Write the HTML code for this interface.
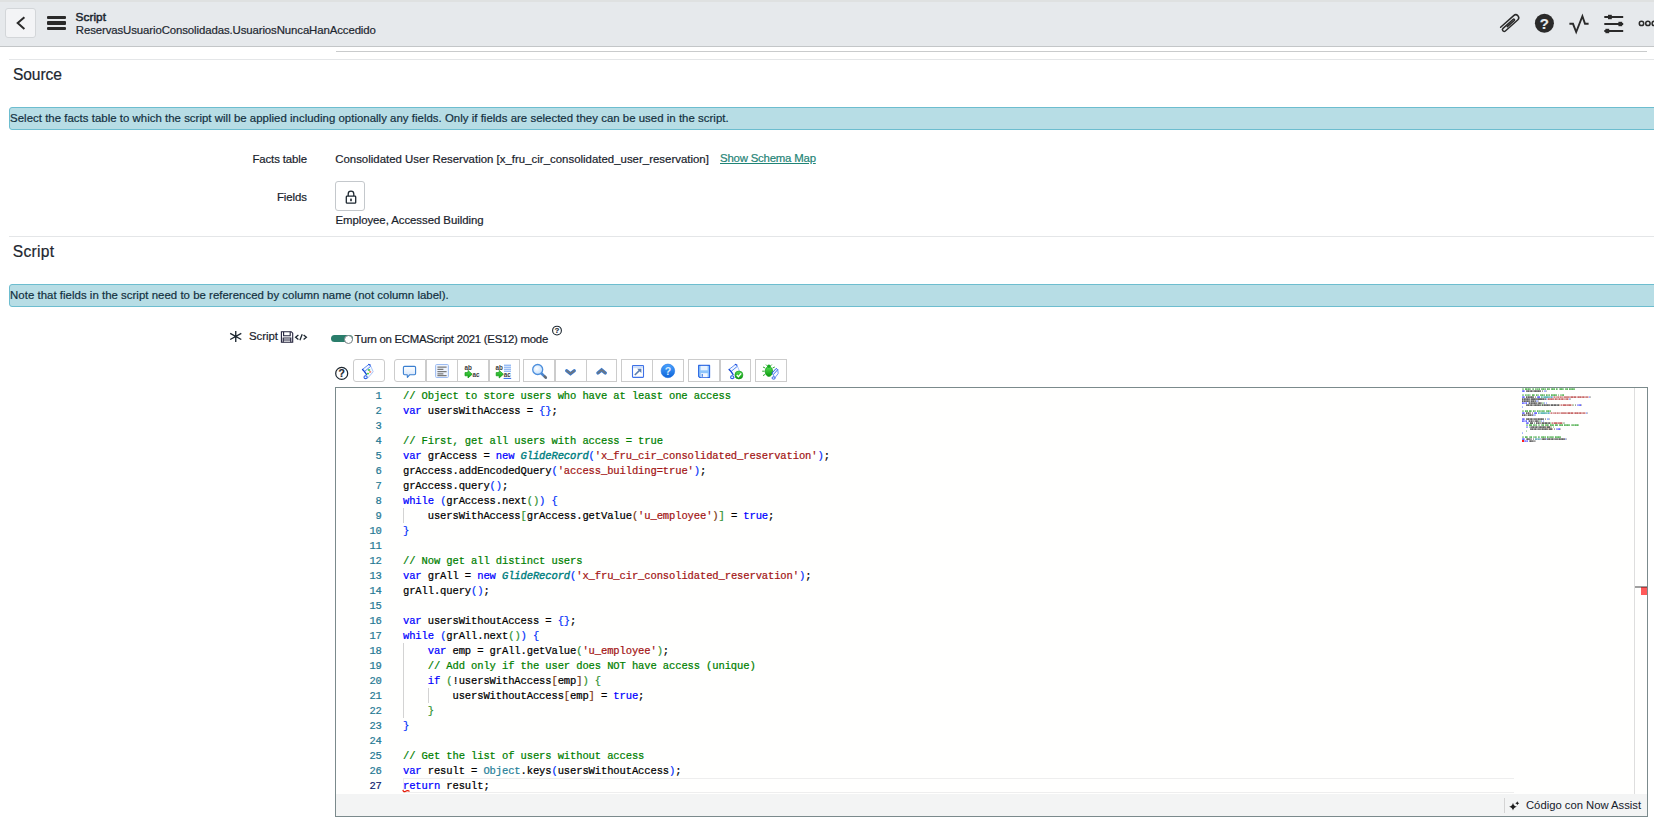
<!DOCTYPE html>
<html lang="en">
<head>
<meta charset="utf-8">
<title>Script</title>
<style>
*{box-sizing:border-box;margin:0;padding:0}
html,body{width:1654px;height:820px;overflow:hidden;background:#fff}
body{position:relative;font-family:"Liberation Sans",sans-serif;font-size:11.4px;color:#18222c;-webkit-text-stroke:0.2px currentColor}
.abs{position:absolute;white-space:nowrap}
.t{position:absolute;white-space:pre;line-height:14px;height:14px}
/* header */
#hdr{position:absolute;left:0;top:0;width:1654px;height:47px;background:#e6e9ec;border-bottom:1px solid #c3c6c8}
#hdr .topline{position:absolute;left:0;top:0;width:100%;height:2px;background:#dfe1e1}
#back{position:absolute;left:5px;top:8px;width:31px;height:30px;background:#f3f4f6;border:1px solid #d3d6d9;border-radius:3px}
.hl{position:absolute;height:1px}
/* info bars */
.info{position:absolute;left:9px;width:1660px;height:23px;background:#b7dde5;border:1px solid #6dbdcf;border-radius:3px}
.info span{position:absolute;left:0.1px;top:2.7px;line-height:14px;white-space:pre;color:#12303f}
/* toolbar buttons */
.tb{position:absolute;top:359px;height:23px;background:#fff;border:1px solid #ccc;border-radius:3px}
.tb i{position:absolute;top:0;width:1px;height:21px;background:#ccc}
.ic{position:absolute;top:362.5px;width:16px;height:16px}
/* editor */
#ed{position:absolute;left:335px;top:387px;width:1313px;height:430px;border:1px solid #7b8a8c;background:#fffffe;overflow:hidden}
#code{position:absolute;left:0;top:0;font-family:"Liberation Mono",monospace;font-size:10.5px;letter-spacing:-0.115px;line-height:15px;color:#000;-webkit-text-stroke:0.22px currentColor}
#code .ln{position:absolute;left:0;width:45.8px;text-align:right;color:#237893;white-space:pre;height:15px}
#code .ln.cur{color:#0b216f}
#code .cl{position:absolute;left:67px;white-space:pre;height:15px}
.c{color:#008000}.k{color:#0000ff}.s{color:#a31515}.g{color:#008080;font-style:italic;-webkit-text-stroke:0.4px currentColor}.o{color:#267f99}.b1{color:#0431fa}.b2{color:#319331}.b3{color:#7b3814}
.guide{position:absolute;width:1px;background:#d3d3d3}
#status{position:absolute;left:0;top:406px;width:1311px;height:22px;background:#f3f4f4}
</style>
</head>
<body>
<!-- HEADER -->
<div id="hdr">
  <div class="topline"></div>
  <div id="back"><svg width="29" height="28" viewBox="0 0 29 28" style="position:absolute;left:0;top:0"><path d="M18.4 8.3 L11.7 14.1 L18.4 19.9" fill="none" stroke="#2a2a2a" stroke-width="2" stroke-linecap="butt" stroke-linejoin="miter"/></svg></div>
  <div class="abs" style="left:46.7px;top:16px;width:19.5px;height:3.4px;background:#2a2a2a;border-radius:1px"></div>
  <div class="abs" style="left:46.7px;top:21.4px;width:19.5px;height:3.4px;background:#2a2a2a;border-radius:1px"></div>
  <div class="abs" style="left:46.7px;top:26.8px;width:19.5px;height:3.4px;background:#2a2a2a;border-radius:1px"></div>
  <div class="t" id="h1" style="left:75.6px;top:10px;font-size:11.8px;letter-spacing:0.05px;-webkit-text-stroke:0.5px #1d2730;color:#1d2730">Script</div>
  <div class="t" id="h2" style="left:75.8px;top:22.6px;font-size:11.4px;letter-spacing:-0.1px;color:#1d2730">ReservasUsuarioConsolidadas.UsuariosNuncaHanAccedido</div>
  <!-- right icons -->
  <svg class="abs" style="left:1496px;top:10px" width="158" height="28" viewBox="1496 10 158 28">
    <!-- paperclip -->
    <g fill="none" stroke="#2a2a2a" stroke-width="1.5" stroke-linecap="round" stroke-linejoin="round" transform="matrix(0.747 -0.664 0.664 0.747 1500.6 27.2)">
      <path d="M0 0 L17.5 0 A3 3 0 0 1 17.5 6 L1 6 A1.75 1.75 0 0 1 1 2.5 L14.7 2.5 A0.8 0.8 0 0 1 14.7 4.1 L5.4 4.1"/>
    </g>
    <!-- help -->
    <circle cx="1544.4" cy="23.3" r="9.5" fill="#2a2a2a"/>
    <!-- activity -->
    <path d="M1569.4 23.8 H1573 L1576.2 32 L1582.4 16.2 L1585 23.8 H1588.6" fill="none" stroke="#2a2a2a" stroke-width="1.9" stroke-linejoin="miter"/>
    <!-- sliders -->
    <g stroke="#2a2a2a" stroke-width="2" fill="#2a2a2a">
      <path d="M1604.3 17 H1623.2 M1604.3 24 H1623.2 M1604.3 31 H1623.2" fill="none"/>
      <rect x="1608" y="14.8" width="3.8" height="4.4" stroke="none"/>
      <rect x="1618.4" y="21.8" width="3.8" height="4.4" stroke="none"/>
      <rect x="1605.4" y="28.8" width="3.8" height="4.4" stroke="none"/>
    </g>
    <!-- more -->
    <g fill="none" stroke="#2a2a2a" stroke-width="1.5">
      <circle cx="1641.5" cy="23.4" r="2.2"/><circle cx="1647.9" cy="23.4" r="2.2"/><circle cx="1654.3" cy="23.4" r="2.2"/>
    </g>
  </svg>
  <div class="abs" id="hq" style="left:1539.4px;top:15.2px;width:10px;height:18px;line-height:18px;text-align:center;font-weight:bold;font-size:15px;color:#e6e9ec">?</div>
</div>
<div class="hl" style="left:336px;top:51px;width:1311px;background:#c9cbcc"></div>
<div class="hl" style="left:9px;top:59px;width:1645px;background:#e4e6e8"></div>
<div class="t" id="src" style="left:13px;top:64.9px;font-size:15.6px;line-height:20px;height:20px;letter-spacing:-0.12px;color:#1d2730">Source</div>
<div class="info" style="top:107px"><span id="i1" style="letter-spacing:0.033px">Select the facts table to which the script will be applied including optionally any fields. Only if fields are selected they can be used in the script.</span></div>
<div class="t" id="l1" style="left:252.4px;top:152px;letter-spacing:-0.1px">Facts table</div>
<div class="t" id="v1" style="left:335.2px;top:152px;letter-spacing:0.02px">Consolidated User Reservation [x_fru_cir_consolidated_user_reservation]</div>
<div class="t" id="lk" style="left:720px;top:151px;letter-spacing:-0.2px;color:#1f8476;text-decoration:underline">Show Schema Map</div>
<div class="t" id="l2" style="left:277px;top:190px;letter-spacing:-0.1px">Fields</div>
<div class="abs" id="lock" style="left:335px;top:181px;width:30px;height:29.5px;border:1px solid #c4c8cc;border-radius:3px;background:#fff">
  <svg width="28" height="28" viewBox="0 0 28 28" style="position:absolute;left:0;top:0"><rect x="10.3" y="14.2" width="9.4" height="7" rx="0.8" fill="none" stroke="#1d2730" stroke-width="1.3"/><path d="M12.2 14 V12 A2.8 2.8 0 0 1 17.8 12 V14" fill="none" stroke="#1d2730" stroke-width="1.3"/><rect x="14.2" y="16.6" width="1.6" height="2.6" fill="#1d2730"/></svg>
</div>
<div class="t" id="v2" style="left:335.4px;top:213px;letter-spacing:-0.05px">Employee, Accessed Building</div>
<div class="hl" style="left:9px;top:236px;width:1645px;background:#e4e6e8"></div>
<div class="t" id="scr" style="left:12.8px;top:242.2px;font-size:15.6px;line-height:20px;height:20px;letter-spacing:0.3px;color:#1d2730">Script</div>
<div class="info" style="top:284px"><span id="i2" style="letter-spacing:0.034px">Note that fields in the script need to be referenced by column name (not column label).</span></div>
<!-- script label row -->
<svg class="abs" style="left:228px;top:329px" width="16" height="15" viewBox="228 329 16 15"><path d="M235.75 330.9 V342 M230.2 333.4 L241.3 339.5 M241.3 333.4 L230.2 339.5" stroke="#1d2730" stroke-width="1.35" fill="none"/></svg>
<div class="t" id="l3" style="left:249px;top:329px;letter-spacing:-0.05px">Script</div>
<svg class="abs" style="left:280px;top:330px" width="30" height="14" viewBox="280 330 30 14">
  <g fill="none" stroke="#23233d" stroke-width="1.1">
    <path d="M281.4 331.7 H291.2 L292.7 333.2 V342.2 H281.4 Z"/>
    <path d="M283.6 331.7 V335.8 H290.2 V331.7"/>
    <path d="M283.2 342.2 V338 H290.8 V342.2 M283.2 340 H290.8" fill="none"/>
  </g>
  <g fill="none" stroke="#1d2730" stroke-width="1.3"><path d="M298.4 334.9 L295.6 337.2 L298.4 339.5"/><path d="M303.6 334.9 L306.4 337.2 L303.6 339.5"/><path d="M302.2 334.2 L299.9 340.2"/></g>
</svg>
<div class="abs" style="left:331px;top:335.2px;width:21.6px;height:7px;border-radius:3.5px;background:#2a7d6b"></div>
<div class="abs" style="left:344.2px;top:334.6px;width:9px;height:9px;border-radius:50%;background:#fff;border:1px solid #7b8387"></div>
<div class="t" id="tg" style="left:354.6px;top:331.7px;letter-spacing:-0.27px">Turn on ECMAScript 2021 (ES12) mode</div>
<svg class="abs" style="left:551px;top:325px" width="12" height="12" viewBox="0 0 12 12"><circle cx="6" cy="5.6" r="4.4" fill="none" stroke="#1d2730" stroke-width="1.1"/></svg>
<div class="abs" id="tgq" style="left:554px;top:326.2px;width:6px;height:9px;line-height:9px;font-size:7.4px;font-weight:bold;text-align:center;color:#1d2730">?</div>
<!-- toolbar -->
<svg class="abs" style="left:334px;top:366px" width="16" height="16" viewBox="0 0 16 16"><circle cx="7.7" cy="7.4" r="6" fill="none" stroke="#1d2730" stroke-width="1.2"/></svg>
<div class="abs" id="tbq" style="left:337.7px;top:367.2px;width:8px;height:13px;line-height:13px;font-size:10.4px;font-weight:bold;text-align:center;color:#1d2730">?</div>
<div class="tb" style="left:353.20px;width:31.38px;border-radius:3px"></div>
<div class="tb" style="left:394.40px;width:31.98px;border-radius:3px 0 0 3px"></div>
<div class="tb" style="left:425.78px;width:31.98px;border-radius:0"></div>
<div class="tb" style="left:457.16px;width:31.98px;border-radius:0"></div>
<div class="tb" style="left:488.54px;width:31.38px;border-radius:0"></div>
<div class="tb" style="left:523.20px;width:31.98px;border-radius:0"></div>
<div class="tb" style="left:554.58px;width:31.98px;border-radius:0"></div>
<div class="tb" style="left:585.96px;width:31.38px;border-radius:0"></div>
<div class="tb" style="left:621.10px;width:31.98px;border-radius:0"></div>
<div class="tb" style="left:652.48px;width:31.38px;border-radius:0"></div>
<div class="tb" style="left:688.20px;width:31.98px;border-radius:0"></div>
<div class="tb" style="left:719.58px;width:31.38px;border-radius:0"></div>
<div class="tb" style="left:755.20px;width:31.38px;border-radius:0"></div>
<svg class="abs" style="left:350px;top:358px" width="440" height="26" viewBox="350 358 440 26">
<defs>
<linearGradient id="gb" x1="0" y1="0" x2="0" y2="1"><stop offset="0" stop-color="#4aa3ff"/><stop offset="1" stop-color="#0d63d8"/></linearGradient>
<linearGradient id="gl" x1="0" y1="0" x2="0" y2="1"><stop offset="0" stop-color="#ffffff"/><stop offset="1" stop-color="#cfe2fb"/></linearGradient>
<radialGradient id="gm" cx="0.4" cy="0.4" r="0.7"><stop offset="0" stop-color="#ffffff"/><stop offset="1" stop-color="#b9dafc"/></radialGradient>
<linearGradient id="gg" x1="0" y1="0" x2="0" y2="1"><stop offset="0" stop-color="#58e058"/><stop offset="1" stop-color="#0a9a0a"/></linearGradient>
</defs>
<!-- 1 scroll with arrows -->
<g transform="translate(0 0)"><path d="M364.6 371.4 L370.8 366.2 L373.2 371.8 L367.8 378 L365 376 L366.4 374.4 Z" fill="#f8fbff" stroke="#9fbdf8" stroke-width="0.9" stroke-linejoin="round"/><path d="M362.6 369.3 L368.9 364.4 L370.8 366.2 L364.6 371.4 Z" fill="#f0f6ff" stroke="#4f82f2" stroke-width="0.9" stroke-linejoin="round"/><path d="M362.5 369.5 L364.5 371.6 L366.4 374.4" fill="none" stroke="#1446d4" stroke-width="1.3" stroke-linecap="round" stroke-linejoin="round"/><path d="M368.7 364.4 L370.3 365" fill="none" stroke="#1748d8" stroke-width="1.1" stroke-linecap="round"/><ellipse cx="365.6" cy="377.2" rx="1.6" ry="1.4" fill="#eaf2ff" stroke="#2c62e4" stroke-width="1.1"/><ellipse cx="369" cy="370" rx="1.3" ry="0.9" fill="#4fd04f"/><ellipse cx="367.9" cy="373.6" rx="1.3" ry="0.9" fill="#4fd04f"/><ellipse cx="370.1" cy="371.9" rx="1.2" ry="0.9" fill="#f08078"/></g>
<!-- 2 comment bubble -->
<path d="M404.6 366.4 H414.4 Q415.6 366.4 415.6 367.6 V373.6 Q415.6 374.8 414.4 374.8 H409.6 L407.4 377.4 L407.2 374.8 H404.6 Q403.4 374.8 403.4 373.6 V367.6 Q403.4 366.4 404.6 366.4 Z" fill="url(#gl)" stroke="#3a7fd0" stroke-width="1.1" stroke-linejoin="round"/>
<!-- 3 align -->
<rect x="435.6" y="364.5" width="12.8" height="13" rx="1" fill="#eef4ff" stroke="#9dbcf2" stroke-width="1"/>
<path d="M437.4 367.2 H446.6 M437.4 369.4 H443.4 M437.4 371.6 H446.6 M437.4 373.8 H443.4 M437.4 375.6 H446.6" stroke="#7a7a7a" stroke-width="1.2"/>
<!-- 4 replace -->
<text x="464.6" y="369.6" font-family="Liberation Sans, sans-serif" font-size="6.3" font-weight="bold" fill="#3a3a3a" letter-spacing="-0.2">ab</text>
<path d="M465 372.6 h3 v-2.2 l4.2 3.8 l-4.2 3.8 v-2.2 h-3 Z" fill="url(#gg)" stroke="#0f9a12" stroke-width="0.7" stroke-linejoin="round"/>
<text x="472.6" y="376.6" font-family="Liberation Sans, sans-serif" font-size="6.3" font-weight="bold" fill="#3a3a3a" letter-spacing="-0.1">ac</text>
<!-- 5 replace all -->
<path d="M504 365.2 H511 M504 367.2 H511 M504 369.2 H511 M504 371.2 H511" stroke="#6aa0f2" stroke-width="1"/>
<text x="495.6" y="369.6" font-family="Liberation Sans, sans-serif" font-size="6.3" font-weight="bold" fill="#3a3a3a" letter-spacing="-0.2">ab</text>
<path d="M496.2 372.6 h3 v-2.2 l4.2 3.8 l-4.2 3.8 v-2.2 h-3 Z" fill="url(#gg)" stroke="#0f9a12" stroke-width="0.7" stroke-linejoin="round"/>
<text x="503.8" y="376.8" font-family="Liberation Sans, sans-serif" font-size="6.3" font-weight="bold" fill="#3a3a3a" letter-spacing="-0.1">ac</text>
<path d="M503.6 378.4 H511.2" stroke="#2f6be8" stroke-width="1"/>
<!-- 6 magnifier -->
<path d="M541.2 373.2 L545.8 377.6" stroke="#4a86d0" stroke-width="2.6" stroke-linecap="round"/>
<path d="M544.6 376.4 L545.8 377.6" stroke="#6b6b6b" stroke-width="2.2" stroke-linecap="round"/>
<circle cx="537.7" cy="369.5" r="5" fill="url(#gm)" stroke="#4d8fdc" stroke-width="1.3"/>
<!-- 7 chevron down -->
<path d="M566.7 370.7 L570.5 373.7 L574.3 370.7" fill="none" stroke="#3c7acb" stroke-width="3.3" stroke-linecap="round" stroke-linejoin="miter"/>
<path d="M566.9 370.8 L570.5 373.6 L574.1 370.8" fill="none" stroke="#70757c" stroke-width="1.6" stroke-linecap="round" stroke-linejoin="miter"/>
<!-- 8 chevron up -->
<path d="M597.9 373 L601.6 369.9 L605.3 373" fill="none" stroke="#3c7acb" stroke-width="3.3" stroke-linecap="round" stroke-linejoin="miter"/>
<path d="M598.1 372.9 L601.6 370 L605.1 372.9" fill="none" stroke="#70757c" stroke-width="1.6" stroke-linecap="round" stroke-linejoin="miter"/>
<!-- 9 popout -->
<rect x="632.5" y="365.6" width="11" height="11.8" rx="0.6" fill="#fff" stroke="#3f72e6" stroke-width="1.1"/>
<rect x="633.1" y="366.2" width="9.8" height="2" fill="#cfe0fa"/>
<path d="M634.8 375 L640.6 369.4" stroke="#5d7fae" stroke-width="1.6"/>
<path d="M637.2 368.8 H641.4 V373 Z" fill="#5d7fae"/>
<!-- 10 help -->
<circle cx="667.9" cy="370.9" r="6.8" fill="url(#gb)" stroke="#1a6fe0" stroke-width="0.6"/>
<text x="667.9" y="374.6" text-anchor="middle" font-family="Liberation Sans, sans-serif" font-weight="bold" font-size="10.6" fill="#d7ebff">?</text>
<!-- 11 floppy -->
<path d="M698.6 365.4 H709.6 V377.5 H699.8 L698.6 376.3 Z" fill="#8ec5fb" stroke="#2d68e2" stroke-width="1.1" stroke-linejoin="round"/>
<rect x="700.6" y="365.9" width="7" height="4.4" fill="#e9f3ff"/>
<rect x="700.8" y="373.2" width="6.8" height="4" fill="#f4f8ff"/>
<rect x="701.6" y="374" width="1.4" height="2.8" fill="#5a8ee8"/>
<!-- 12 scroll check -->
<g transform="translate(366.6 0)"><path d="M364.6 371.4 L370.8 366.2 L373.2 371.8 L367.8 378 L365 376 L366.4 374.4 Z" fill="#f8fbff" stroke="#9fbdf8" stroke-width="0.9" stroke-linejoin="round"/><path d="M362.6 369.3 L368.9 364.4 L370.8 366.2 L364.6 371.4 Z" fill="#f0f6ff" stroke="#4f82f2" stroke-width="0.9" stroke-linejoin="round"/><path d="M362.5 369.5 L364.5 371.6 L366.4 374.4" fill="none" stroke="#1446d4" stroke-width="1.3" stroke-linecap="round" stroke-linejoin="round"/><path d="M368.7 364.4 L370.3 365" fill="none" stroke="#1748d8" stroke-width="1.1" stroke-linecap="round"/><ellipse cx="365.6" cy="377.2" rx="1.6" ry="1.4" fill="#eaf2ff" stroke="#2c62e4" stroke-width="1.1"/></g>
<circle cx="738.9" cy="375" r="4" fill="url(#gg)" stroke="#0c8a14" stroke-width="0.6"/>
<path d="M736.8 375 L738.4 376.7 L741.2 373.3" fill="none" stroke="#fff" stroke-width="1.3"/>
<!-- 13 bug -->
<path d="M765.2 368 l-2.2 -1 M764.6 371.2 h-2.4 M765.2 374.4 l-2.2 1.2 M772.6 368 l2.2 -1 M767.2 365.8 l-1.2 -1.2 M770.6 365.8 l1.2 -1.2" stroke="#14a01a" stroke-width="0.9" fill="none"/>
<ellipse cx="768.9" cy="371.4" rx="3.7" ry="5" fill="url(#gg)" stroke="#0c9416" stroke-width="0.7"/>
<circle cx="768.9" cy="366.2" r="1.7" fill="#18a822"/>
<path d="M776.2 368.4 L777.8 369.8 L773.4 374.6 L771.8 373.2 Z" fill="#e8f0ff" stroke="#2a5ae0" stroke-width="1" stroke-linejoin="round"/>
<path d="M773.4 374.6 L777.8 369.8 L778.2 373.6 L774.4 378.4 Z" fill="#f6f9ff" stroke="#5c8af0" stroke-width="0.9" stroke-linejoin="round"/>
<ellipse cx="773.6" cy="378" rx="1.6" ry="1.2" fill="#dfe9ff" stroke="#2a5ae0" stroke-width="0.9"/>
</svg>


<div id="ed">
  <div class="abs" style="left:67px;top:390px;width:1111px;height:15px;border:1px solid #eeeeee;border-right:none"></div>
  <div class="guide" style="left:67px;top:120px;height:15px"></div>
  <div class="guide" style="left:67px;top:255px;height:75px"></div>
  <div class="guide" style="left:91.7px;top:300px;height:15px"></div>
  <div id="code">
<div class="ln" style="top:0.7px">1</div><div class="cl" style="top:0.7px"><span class="c">// Object to store users who have at least one access</span></div>
<div class="ln" style="top:15.7px">2</div><div class="cl" style="top:15.7px"><span class="k">var</span> usersWithAccess = <span class="b1">{</span><span class="b1">}</span>;</div>
<div class="ln" style="top:30.7px">3</div><div class="cl" style="top:30.7px"></div>
<div class="ln" style="top:45.7px">4</div><div class="cl" style="top:45.7px"><span class="c">// First, get all users with access = true</span></div>
<div class="ln" style="top:60.7px">5</div><div class="cl" style="top:60.7px"><span class="k">var</span> grAccess = <span class="k">new</span> <span class="g">GlideRecord</span><span class="b1">(</span><span class="s">&#x27;x_fru_cir_consolidated_reservation&#x27;</span><span class="b1">)</span>;</div>
<div class="ln" style="top:75.7px">6</div><div class="cl" style="top:75.7px">grAccess.addEncodedQuery<span class="b1">(</span><span class="s">&#x27;access_building=true&#x27;</span><span class="b1">)</span>;</div>
<div class="ln" style="top:90.7px">7</div><div class="cl" style="top:90.7px">grAccess.query<span class="b1">(</span><span class="b1">)</span>;</div>
<div class="ln" style="top:105.7px">8</div><div class="cl" style="top:105.7px"><span class="k">while</span> <span class="b1">(</span>grAccess.next<span class="b2">(</span><span class="b2">)</span><span class="b1">)</span> <span class="b1">{</span></div>
<div class="ln" style="top:120.7px">9</div><div class="cl" style="top:120.7px">    usersWithAccess<span class="b2">[</span>grAccess.getValue<span class="b3">(</span><span class="s">&#x27;u_employee&#x27;</span><span class="b3">)</span><span class="b2">]</span> = <span class="k">true</span>;</div>
<div class="ln" style="top:135.7px">10</div><div class="cl" style="top:135.7px"><span class="b1">}</span></div>
<div class="ln" style="top:150.7px">11</div><div class="cl" style="top:150.7px"></div>
<div class="ln" style="top:165.7px">12</div><div class="cl" style="top:165.7px"><span class="c">// Now get all distinct users</span></div>
<div class="ln" style="top:180.7px">13</div><div class="cl" style="top:180.7px"><span class="k">var</span> grAll = <span class="k">new</span> <span class="g">GlideRecord</span><span class="b1">(</span><span class="s">&#x27;x_fru_cir_consolidated_reservation&#x27;</span><span class="b1">)</span>;</div>
<div class="ln" style="top:195.7px">14</div><div class="cl" style="top:195.7px">grAll.query<span class="b1">(</span><span class="b1">)</span>;</div>
<div class="ln" style="top:210.7px">15</div><div class="cl" style="top:210.7px"></div>
<div class="ln" style="top:225.7px">16</div><div class="cl" style="top:225.7px"><span class="k">var</span> usersWithoutAccess = <span class="b1">{</span><span class="b1">}</span>;</div>
<div class="ln" style="top:240.7px">17</div><div class="cl" style="top:240.7px"><span class="k">while</span> <span class="b1">(</span>grAll.next<span class="b2">(</span><span class="b2">)</span><span class="b1">)</span> <span class="b1">{</span></div>
<div class="ln" style="top:255.7px">18</div><div class="cl" style="top:255.7px">    <span class="k">var</span> emp = grAll.getValue<span class="b2">(</span><span class="s">&#x27;u_employee&#x27;</span><span class="b2">)</span>;</div>
<div class="ln" style="top:270.7px">19</div><div class="cl" style="top:270.7px">    <span class="c">// Add only if the user does NOT have access (unique)</span></div>
<div class="ln" style="top:285.7px">20</div><div class="cl" style="top:285.7px">    <span class="k">if</span> <span class="b2">(</span>!usersWithAccess<span class="b3">[</span>emp<span class="b3">]</span><span class="b2">)</span> <span class="b2">{</span></div>
<div class="ln" style="top:300.7px">21</div><div class="cl" style="top:300.7px">        usersWithoutAccess<span class="b3">[</span>emp<span class="b3">]</span> = <span class="k">true</span>;</div>
<div class="ln" style="top:315.7px">22</div><div class="cl" style="top:315.7px">    <span class="b2">}</span></div>
<div class="ln" style="top:330.7px">23</div><div class="cl" style="top:330.7px"><span class="b1">}</span></div>
<div class="ln" style="top:345.7px">24</div><div class="cl" style="top:345.7px"></div>
<div class="ln" style="top:360.7px">25</div><div class="cl" style="top:360.7px"><span class="c">// Get the list of users without access</span></div>
<div class="ln" style="top:375.7px">26</div><div class="cl" style="top:375.7px"><span class="k">var</span> result = <span class="o">Object</span>.keys<span class="b1">(</span>usersWithoutAccess<span class="b1">)</span>;</div>
<div class="ln cur" style="top:390.7px">27</div><div class="cl" style="top:390.7px"><span class="k">return</span> result;</div>
  </div>
  <svg class="abs" style="left:66px;top:400px;z-index:3" width="10" height="6" viewBox="0 0 10 6"><path d="M0.9 1.8 Q1.5 4.6 3.6 3.2 Q5.6 1.8 7.6 3.4" fill="none" stroke="#e51400" stroke-width="1.2"/></svg>
  <!-- minimap -->
  <svg class="abs" style="left:1186px;top:0" width="126" height="60" viewBox="0 0 126 60"><rect x="0" y="0.3" width="2" height="1.6" fill="#1f9a1f" opacity="0.47"/><rect x="3" y="0.3" width="2" height="1.6" fill="#1f9a1f" opacity="0.78"/><rect x="5" y="0.3" width="1" height="1.6" fill="#1f9a1f" opacity="0.47"/><rect x="6" y="0.3" width="1" height="1.6" fill="#1f9a1f" opacity="0.78"/><rect x="7" y="0.3" width="1" height="1.6" fill="#1f9a1f" opacity="0.64"/><rect x="8" y="0.3" width="1" height="1.6" fill="#1f9a1f" opacity="0.47"/><rect x="10" y="0.3" width="1" height="1.6" fill="#1f9a1f" opacity="0.47"/><rect x="11" y="0.3" width="1" height="1.6" fill="#1f9a1f" opacity="0.64"/><rect x="13" y="0.3" width="1" height="1.6" fill="#1f9a1f" opacity="0.64"/><rect x="14" y="0.3" width="1" height="1.6" fill="#1f9a1f" opacity="0.47"/><rect x="15" y="0.3" width="1" height="1.6" fill="#1f9a1f" opacity="0.64"/><rect x="16" y="0.3" width="1" height="1.6" fill="#1f9a1f" opacity="0.47"/><rect x="17" y="0.3" width="1" height="1.6" fill="#1f9a1f" opacity="0.78"/><rect x="19" y="0.3" width="2" height="1.6" fill="#1f9a1f" opacity="0.64"/><rect x="21" y="0.3" width="1" height="1.6" fill="#1f9a1f" opacity="0.78"/><rect x="22" y="0.3" width="1" height="1.6" fill="#1f9a1f" opacity="0.47"/><rect x="23" y="0.3" width="1" height="1.6" fill="#1f9a1f" opacity="0.64"/><rect x="25" y="0.3" width="1" height="1.6" fill="#1f9a1f" opacity="0.78"/><rect x="26" y="0.3" width="2" height="1.6" fill="#1f9a1f" opacity="0.64"/><rect x="29" y="0.3" width="1" height="1.6" fill="#1f9a1f" opacity="0.64"/><rect x="30" y="0.3" width="1" height="1.6" fill="#1f9a1f" opacity="0.78"/><rect x="31" y="0.3" width="1" height="1.6" fill="#1f9a1f" opacity="0.64"/><rect x="32" y="0.3" width="1" height="1.6" fill="#1f9a1f" opacity="0.78"/><rect x="34" y="0.3" width="1" height="1.6" fill="#1f9a1f" opacity="0.78"/><rect x="35" y="0.3" width="1" height="1.6" fill="#1f9a1f" opacity="0.47"/><rect x="37" y="0.3" width="1" height="1.6" fill="#1f9a1f" opacity="0.47"/><rect x="38" y="0.3" width="2" height="1.6" fill="#1f9a1f" opacity="0.78"/><rect x="40" y="0.3" width="1" height="1.6" fill="#1f9a1f" opacity="0.64"/><rect x="41" y="0.3" width="1" height="1.6" fill="#1f9a1f" opacity="0.47"/><rect x="43" y="0.3" width="2" height="1.6" fill="#1f9a1f" opacity="0.64"/><rect x="45" y="0.3" width="1" height="1.6" fill="#1f9a1f" opacity="0.78"/><rect x="47" y="0.3" width="1" height="1.6" fill="#1f9a1f" opacity="0.78"/><rect x="48" y="0.3" width="2" height="1.6" fill="#1f9a1f" opacity="0.64"/><rect x="50" y="0.3" width="1" height="1.6" fill="#1f9a1f" opacity="0.78"/><rect x="51" y="0.3" width="2" height="1.6" fill="#1f9a1f" opacity="0.64"/><rect x="0" y="2.3" width="1" height="1.6" fill="#2a2aff" opacity="0.64"/><rect x="1" y="2.3" width="1" height="1.6" fill="#2a2aff" opacity="0.78"/><rect x="2" y="2.3" width="1" height="1.6" fill="#2a2aff" opacity="0.47"/><rect x="4" y="2.3" width="2" height="1.6" fill="#222222" opacity="0.64"/><rect x="6" y="2.3" width="1" height="1.6" fill="#222222" opacity="0.78"/><rect x="7" y="2.3" width="1" height="1.6" fill="#222222" opacity="0.47"/><rect x="8" y="2.3" width="1" height="1.6" fill="#222222" opacity="0.64"/><rect x="9" y="2.3" width="1" height="1.6" fill="#222222" opacity="0.78"/><rect x="10" y="2.3" width="2" height="1.6" fill="#222222" opacity="0.47"/><rect x="12" y="2.3" width="1" height="1.6" fill="#222222" opacity="0.64"/><rect x="13" y="2.3" width="1" height="1.6" fill="#222222" opacity="0.78"/><rect x="14" y="2.3" width="2" height="1.6" fill="#222222" opacity="0.64"/><rect x="16" y="2.3" width="1" height="1.6" fill="#222222" opacity="0.78"/><rect x="17" y="2.3" width="2" height="1.6" fill="#222222" opacity="0.64"/><rect x="20" y="2.3" width="1" height="1.6" fill="#222222" opacity="0.47"/><rect x="22" y="2.3" width="1" height="1.6" fill="#2a4cfb" opacity="0.47"/><rect x="23" y="2.3" width="1" height="1.6" fill="#2a4cfb" opacity="0.47"/><rect x="24" y="2.3" width="1" height="1.6" fill="#222222" opacity="0.30"/><rect x="0" y="6.3" width="2" height="1.6" fill="#1f9a1f" opacity="0.47"/><rect x="3" y="6.3" width="1" height="1.6" fill="#1f9a1f" opacity="0.64"/><rect x="4" y="6.3" width="2" height="1.6" fill="#1f9a1f" opacity="0.47"/><rect x="6" y="6.3" width="1" height="1.6" fill="#1f9a1f" opacity="0.64"/><rect x="7" y="6.3" width="1" height="1.6" fill="#1f9a1f" opacity="0.47"/><rect x="8" y="6.3" width="1" height="1.6" fill="#1f9a1f" opacity="0.30"/><rect x="10" y="6.3" width="2" height="1.6" fill="#1f9a1f" opacity="0.78"/><rect x="12" y="6.3" width="1" height="1.6" fill="#1f9a1f" opacity="0.47"/><rect x="14" y="6.3" width="1" height="1.6" fill="#1f9a1f" opacity="0.78"/><rect x="15" y="6.3" width="2" height="1.6" fill="#1f9a1f" opacity="0.47"/><rect x="18" y="6.3" width="2" height="1.6" fill="#1f9a1f" opacity="0.64"/><rect x="20" y="6.3" width="1" height="1.6" fill="#1f9a1f" opacity="0.78"/><rect x="21" y="6.3" width="1" height="1.6" fill="#1f9a1f" opacity="0.47"/><rect x="22" y="6.3" width="1" height="1.6" fill="#1f9a1f" opacity="0.64"/><rect x="24" y="6.3" width="1" height="1.6" fill="#1f9a1f" opacity="0.78"/><rect x="25" y="6.3" width="2" height="1.6" fill="#1f9a1f" opacity="0.47"/><rect x="27" y="6.3" width="1" height="1.6" fill="#1f9a1f" opacity="0.64"/><rect x="29" y="6.3" width="1" height="1.6" fill="#1f9a1f" opacity="0.78"/><rect x="30" y="6.3" width="2" height="1.6" fill="#1f9a1f" opacity="0.64"/><rect x="32" y="6.3" width="1" height="1.6" fill="#1f9a1f" opacity="0.78"/><rect x="33" y="6.3" width="2" height="1.6" fill="#1f9a1f" opacity="0.64"/><rect x="36" y="6.3" width="1" height="1.6" fill="#1f9a1f" opacity="0.47"/><rect x="38" y="6.3" width="2" height="1.6" fill="#1f9a1f" opacity="0.47"/><rect x="40" y="6.3" width="1" height="1.6" fill="#1f9a1f" opacity="0.64"/><rect x="41" y="6.3" width="1" height="1.6" fill="#1f9a1f" opacity="0.78"/><rect x="0" y="8.3" width="1" height="1.6" fill="#2a2aff" opacity="0.64"/><rect x="1" y="8.3" width="1" height="1.6" fill="#2a2aff" opacity="0.78"/><rect x="2" y="8.3" width="1" height="1.6" fill="#2a2aff" opacity="0.47"/><rect x="4" y="8.3" width="1" height="1.6" fill="#222222" opacity="0.78"/><rect x="5" y="8.3" width="1" height="1.6" fill="#222222" opacity="0.47"/><rect x="6" y="8.3" width="1" height="1.6" fill="#222222" opacity="0.78"/><rect x="7" y="8.3" width="2" height="1.6" fill="#222222" opacity="0.64"/><rect x="9" y="8.3" width="1" height="1.6" fill="#222222" opacity="0.78"/><rect x="10" y="8.3" width="2" height="1.6" fill="#222222" opacity="0.64"/><rect x="13" y="8.3" width="1" height="1.6" fill="#222222" opacity="0.47"/><rect x="15" y="8.3" width="1" height="1.6" fill="#2a2aff" opacity="0.64"/><rect x="16" y="8.3" width="2" height="1.6" fill="#2a2aff" opacity="0.78"/><rect x="19" y="8.3" width="1" height="1.6" fill="#1f9a9a" opacity="0.78"/><rect x="20" y="8.3" width="2" height="1.6" fill="#1f9a9a" opacity="0.47"/><rect x="22" y="8.3" width="4" height="1.6" fill="#1f9a9a" opacity="0.78"/><rect x="26" y="8.3" width="2" height="1.6" fill="#1f9a9a" opacity="0.64"/><rect x="28" y="8.3" width="1" height="1.6" fill="#1f9a9a" opacity="0.47"/><rect x="29" y="8.3" width="1" height="1.6" fill="#1f9a9a" opacity="0.78"/><rect x="30" y="8.3" width="1" height="1.6" fill="#2a4cfb" opacity="0.47"/><rect x="31" y="8.3" width="1" height="1.6" fill="#b02a2a" opacity="0.30"/><rect x="32" y="8.3" width="1" height="1.6" fill="#b02a2a" opacity="0.64"/><rect x="33" y="8.3" width="1" height="1.6" fill="#b02a2a" opacity="0.30"/><rect x="34" y="8.3" width="2" height="1.6" fill="#b02a2a" opacity="0.47"/><rect x="36" y="8.3" width="1" height="1.6" fill="#b02a2a" opacity="0.64"/><rect x="37" y="8.3" width="1" height="1.6" fill="#b02a2a" opacity="0.30"/><rect x="38" y="8.3" width="1" height="1.6" fill="#b02a2a" opacity="0.64"/><rect x="39" y="8.3" width="2" height="1.6" fill="#b02a2a" opacity="0.47"/><rect x="41" y="8.3" width="1" height="1.6" fill="#b02a2a" opacity="0.30"/><rect x="42" y="8.3" width="5" height="1.6" fill="#b02a2a" opacity="0.64"/><rect x="47" y="8.3" width="2" height="1.6" fill="#b02a2a" opacity="0.47"/><rect x="49" y="8.3" width="2" height="1.6" fill="#b02a2a" opacity="0.78"/><rect x="51" y="8.3" width="1" height="1.6" fill="#b02a2a" opacity="0.47"/><rect x="52" y="8.3" width="2" height="1.6" fill="#b02a2a" opacity="0.78"/><rect x="54" y="8.3" width="1" height="1.6" fill="#b02a2a" opacity="0.30"/><rect x="55" y="8.3" width="1" height="1.6" fill="#b02a2a" opacity="0.47"/><rect x="56" y="8.3" width="1" height="1.6" fill="#b02a2a" opacity="0.78"/><rect x="57" y="8.3" width="1" height="1.6" fill="#b02a2a" opacity="0.64"/><rect x="58" y="8.3" width="1" height="1.6" fill="#b02a2a" opacity="0.78"/><rect x="59" y="8.3" width="1" height="1.6" fill="#b02a2a" opacity="0.47"/><rect x="60" y="8.3" width="1" height="1.6" fill="#b02a2a" opacity="0.64"/><rect x="61" y="8.3" width="1" height="1.6" fill="#b02a2a" opacity="0.78"/><rect x="62" y="8.3" width="2" height="1.6" fill="#b02a2a" opacity="0.47"/><rect x="64" y="8.3" width="2" height="1.6" fill="#b02a2a" opacity="0.64"/><rect x="66" y="8.3" width="1" height="1.6" fill="#b02a2a" opacity="0.30"/><rect x="67" y="8.3" width="1" height="1.6" fill="#2a4cfb" opacity="0.47"/><rect x="68" y="8.3" width="1" height="1.6" fill="#222222" opacity="0.30"/><rect x="0" y="10.3" width="1" height="1.6" fill="#222222" opacity="0.78"/><rect x="1" y="10.3" width="1" height="1.6" fill="#222222" opacity="0.47"/><rect x="2" y="10.3" width="1" height="1.6" fill="#222222" opacity="0.78"/><rect x="3" y="10.3" width="2" height="1.6" fill="#222222" opacity="0.64"/><rect x="5" y="10.3" width="1" height="1.6" fill="#222222" opacity="0.78"/><rect x="6" y="10.3" width="2" height="1.6" fill="#222222" opacity="0.64"/><rect x="8" y="10.3" width="1" height="1.6" fill="#222222" opacity="0.30"/><rect x="9" y="10.3" width="4" height="1.6" fill="#222222" opacity="0.78"/><rect x="13" y="10.3" width="3" height="1.6" fill="#222222" opacity="0.64"/><rect x="16" y="10.3" width="4" height="1.6" fill="#222222" opacity="0.78"/><rect x="20" y="10.3" width="1" height="1.6" fill="#222222" opacity="0.64"/><rect x="21" y="10.3" width="1" height="1.6" fill="#222222" opacity="0.78"/><rect x="22" y="10.3" width="1" height="1.6" fill="#222222" opacity="0.47"/><rect x="23" y="10.3" width="1" height="1.6" fill="#222222" opacity="0.64"/><rect x="24" y="10.3" width="1" height="1.6" fill="#2a4cfb" opacity="0.47"/><rect x="25" y="10.3" width="1" height="1.6" fill="#b02a2a" opacity="0.30"/><rect x="26" y="10.3" width="1" height="1.6" fill="#b02a2a" opacity="0.78"/><rect x="27" y="10.3" width="2" height="1.6" fill="#b02a2a" opacity="0.64"/><rect x="29" y="10.3" width="1" height="1.6" fill="#b02a2a" opacity="0.78"/><rect x="30" y="10.3" width="2" height="1.6" fill="#b02a2a" opacity="0.64"/><rect x="32" y="10.3" width="1" height="1.6" fill="#b02a2a" opacity="0.30"/><rect x="33" y="10.3" width="1" height="1.6" fill="#b02a2a" opacity="0.78"/><rect x="34" y="10.3" width="1" height="1.6" fill="#b02a2a" opacity="0.64"/><rect x="35" y="10.3" width="2" height="1.6" fill="#b02a2a" opacity="0.47"/><rect x="37" y="10.3" width="1" height="1.6" fill="#b02a2a" opacity="0.78"/><rect x="38" y="10.3" width="1" height="1.6" fill="#b02a2a" opacity="0.47"/><rect x="39" y="10.3" width="1" height="1.6" fill="#b02a2a" opacity="0.64"/><rect x="40" y="10.3" width="1" height="1.6" fill="#b02a2a" opacity="0.78"/><rect x="41" y="10.3" width="3" height="1.6" fill="#b02a2a" opacity="0.47"/><rect x="44" y="10.3" width="1" height="1.6" fill="#b02a2a" opacity="0.64"/><rect x="45" y="10.3" width="1" height="1.6" fill="#b02a2a" opacity="0.78"/><rect x="46" y="10.3" width="1" height="1.6" fill="#b02a2a" opacity="0.30"/><rect x="47" y="10.3" width="1" height="1.6" fill="#2a4cfb" opacity="0.47"/><rect x="48" y="10.3" width="1" height="1.6" fill="#222222" opacity="0.30"/><rect x="0" y="12.3" width="1" height="1.6" fill="#222222" opacity="0.78"/><rect x="1" y="12.3" width="1" height="1.6" fill="#222222" opacity="0.47"/><rect x="2" y="12.3" width="1" height="1.6" fill="#222222" opacity="0.78"/><rect x="3" y="12.3" width="2" height="1.6" fill="#222222" opacity="0.64"/><rect x="5" y="12.3" width="1" height="1.6" fill="#222222" opacity="0.78"/><rect x="6" y="12.3" width="2" height="1.6" fill="#222222" opacity="0.64"/><rect x="8" y="12.3" width="1" height="1.6" fill="#222222" opacity="0.30"/><rect x="9" y="12.3" width="1" height="1.6" fill="#222222" opacity="0.78"/><rect x="10" y="12.3" width="1" height="1.6" fill="#222222" opacity="0.64"/><rect x="11" y="12.3" width="1" height="1.6" fill="#222222" opacity="0.78"/><rect x="12" y="12.3" width="1" height="1.6" fill="#222222" opacity="0.47"/><rect x="13" y="12.3" width="1" height="1.6" fill="#222222" opacity="0.64"/><rect x="14" y="12.3" width="1" height="1.6" fill="#2a4cfb" opacity="0.47"/><rect x="15" y="12.3" width="1" height="1.6" fill="#2a4cfb" opacity="0.47"/><rect x="16" y="12.3" width="1" height="1.6" fill="#222222" opacity="0.30"/><rect x="0" y="14.3" width="1" height="1.6" fill="#2a2aff" opacity="0.78"/><rect x="1" y="14.3" width="1" height="1.6" fill="#2a2aff" opacity="0.64"/><rect x="2" y="14.3" width="2" height="1.6" fill="#2a2aff" opacity="0.47"/><rect x="4" y="14.3" width="1" height="1.6" fill="#2a2aff" opacity="0.78"/><rect x="6" y="14.3" width="1" height="1.6" fill="#2a4cfb" opacity="0.47"/><rect x="7" y="14.3" width="1" height="1.6" fill="#222222" opacity="0.78"/><rect x="8" y="14.3" width="1" height="1.6" fill="#222222" opacity="0.47"/><rect x="9" y="14.3" width="1" height="1.6" fill="#222222" opacity="0.78"/><rect x="10" y="14.3" width="2" height="1.6" fill="#222222" opacity="0.64"/><rect x="12" y="14.3" width="1" height="1.6" fill="#222222" opacity="0.78"/><rect x="13" y="14.3" width="2" height="1.6" fill="#222222" opacity="0.64"/><rect x="15" y="14.3" width="1" height="1.6" fill="#222222" opacity="0.30"/><rect x="16" y="14.3" width="1" height="1.6" fill="#222222" opacity="0.64"/><rect x="17" y="14.3" width="1" height="1.6" fill="#222222" opacity="0.78"/><rect x="18" y="14.3" width="1" height="1.6" fill="#222222" opacity="0.64"/><rect x="19" y="14.3" width="1" height="1.6" fill="#222222" opacity="0.47"/><rect x="20" y="14.3" width="1" height="1.6" fill="#3f9f3f" opacity="0.47"/><rect x="21" y="14.3" width="1" height="1.6" fill="#3f9f3f" opacity="0.47"/><rect x="22" y="14.3" width="1" height="1.6" fill="#2a4cfb" opacity="0.47"/><rect x="24" y="14.3" width="1" height="1.6" fill="#2a4cfb" opacity="0.47"/><rect x="4" y="16.3" width="2" height="1.6" fill="#222222" opacity="0.64"/><rect x="6" y="16.3" width="1" height="1.6" fill="#222222" opacity="0.78"/><rect x="7" y="16.3" width="1" height="1.6" fill="#222222" opacity="0.47"/><rect x="8" y="16.3" width="1" height="1.6" fill="#222222" opacity="0.64"/><rect x="9" y="16.3" width="1" height="1.6" fill="#222222" opacity="0.78"/><rect x="10" y="16.3" width="2" height="1.6" fill="#222222" opacity="0.47"/><rect x="12" y="16.3" width="1" height="1.6" fill="#222222" opacity="0.64"/><rect x="13" y="16.3" width="1" height="1.6" fill="#222222" opacity="0.78"/><rect x="14" y="16.3" width="2" height="1.6" fill="#222222" opacity="0.64"/><rect x="16" y="16.3" width="1" height="1.6" fill="#222222" opacity="0.78"/><rect x="17" y="16.3" width="2" height="1.6" fill="#222222" opacity="0.64"/><rect x="19" y="16.3" width="1" height="1.6" fill="#3f9f3f" opacity="0.47"/><rect x="20" y="16.3" width="1" height="1.6" fill="#222222" opacity="0.78"/><rect x="21" y="16.3" width="1" height="1.6" fill="#222222" opacity="0.47"/><rect x="22" y="16.3" width="1" height="1.6" fill="#222222" opacity="0.78"/><rect x="23" y="16.3" width="2" height="1.6" fill="#222222" opacity="0.64"/><rect x="25" y="16.3" width="1" height="1.6" fill="#222222" opacity="0.78"/><rect x="26" y="16.3" width="2" height="1.6" fill="#222222" opacity="0.64"/><rect x="28" y="16.3" width="1" height="1.6" fill="#222222" opacity="0.30"/><rect x="29" y="16.3" width="2" height="1.6" fill="#222222" opacity="0.78"/><rect x="31" y="16.3" width="1" height="1.6" fill="#222222" opacity="0.47"/><rect x="32" y="16.3" width="2" height="1.6" fill="#222222" opacity="0.78"/><rect x="34" y="16.3" width="1" height="1.6" fill="#222222" opacity="0.47"/><rect x="35" y="16.3" width="1" height="1.6" fill="#222222" opacity="0.64"/><rect x="36" y="16.3" width="1" height="1.6" fill="#222222" opacity="0.78"/><rect x="37" y="16.3" width="1" height="1.6" fill="#8a4a2a" opacity="0.47"/><rect x="38" y="16.3" width="1" height="1.6" fill="#b02a2a" opacity="0.30"/><rect x="39" y="16.3" width="1" height="1.6" fill="#b02a2a" opacity="0.64"/><rect x="40" y="16.3" width="1" height="1.6" fill="#b02a2a" opacity="0.30"/><rect x="41" y="16.3" width="3" height="1.6" fill="#b02a2a" opacity="0.78"/><rect x="44" y="16.3" width="1" height="1.6" fill="#b02a2a" opacity="0.47"/><rect x="45" y="16.3" width="2" height="1.6" fill="#b02a2a" opacity="0.64"/><rect x="47" y="16.3" width="2" height="1.6" fill="#b02a2a" opacity="0.78"/><rect x="49" y="16.3" width="1" height="1.6" fill="#b02a2a" opacity="0.30"/><rect x="50" y="16.3" width="1" height="1.6" fill="#8a4a2a" opacity="0.47"/><rect x="51" y="16.3" width="1" height="1.6" fill="#3f9f3f" opacity="0.47"/><rect x="53" y="16.3" width="1" height="1.6" fill="#222222" opacity="0.47"/><rect x="55" y="16.3" width="2" height="1.6" fill="#2a2aff" opacity="0.47"/><rect x="57" y="16.3" width="1" height="1.6" fill="#2a2aff" opacity="0.64"/><rect x="58" y="16.3" width="1" height="1.6" fill="#2a2aff" opacity="0.78"/><rect x="59" y="16.3" width="1" height="1.6" fill="#222222" opacity="0.30"/><rect x="0" y="18.3" width="1" height="1.6" fill="#2a4cfb" opacity="0.47"/><rect x="0" y="22.3" width="2" height="1.6" fill="#1f9a1f" opacity="0.47"/><rect x="3" y="22.3" width="1" height="1.6" fill="#1f9a1f" opacity="0.78"/><rect x="4" y="22.3" width="1" height="1.6" fill="#1f9a1f" opacity="0.64"/><rect x="5" y="22.3" width="1" height="1.6" fill="#1f9a1f" opacity="0.78"/><rect x="7" y="22.3" width="2" height="1.6" fill="#1f9a1f" opacity="0.78"/><rect x="9" y="22.3" width="1" height="1.6" fill="#1f9a1f" opacity="0.47"/><rect x="11" y="22.3" width="1" height="1.6" fill="#1f9a1f" opacity="0.78"/><rect x="12" y="22.3" width="2" height="1.6" fill="#1f9a1f" opacity="0.47"/><rect x="15" y="22.3" width="1" height="1.6" fill="#1f9a1f" opacity="0.78"/><rect x="16" y="22.3" width="1" height="1.6" fill="#1f9a1f" opacity="0.47"/><rect x="17" y="22.3" width="1" height="1.6" fill="#1f9a1f" opacity="0.64"/><rect x="18" y="22.3" width="2" height="1.6" fill="#1f9a1f" opacity="0.47"/><rect x="20" y="22.3" width="2" height="1.6" fill="#1f9a1f" opacity="0.64"/><rect x="22" y="22.3" width="1" height="1.6" fill="#1f9a1f" opacity="0.47"/><rect x="24" y="22.3" width="2" height="1.6" fill="#1f9a1f" opacity="0.64"/><rect x="26" y="22.3" width="1" height="1.6" fill="#1f9a1f" opacity="0.78"/><rect x="27" y="22.3" width="1" height="1.6" fill="#1f9a1f" opacity="0.47"/><rect x="28" y="22.3" width="1" height="1.6" fill="#1f9a1f" opacity="0.64"/><rect x="0" y="24.3" width="1" height="1.6" fill="#2a2aff" opacity="0.64"/><rect x="1" y="24.3" width="1" height="1.6" fill="#2a2aff" opacity="0.78"/><rect x="2" y="24.3" width="1" height="1.6" fill="#2a2aff" opacity="0.47"/><rect x="4" y="24.3" width="1" height="1.6" fill="#222222" opacity="0.78"/><rect x="5" y="24.3" width="1" height="1.6" fill="#222222" opacity="0.47"/><rect x="6" y="24.3" width="1" height="1.6" fill="#222222" opacity="0.78"/><rect x="7" y="24.3" width="2" height="1.6" fill="#222222" opacity="0.47"/><rect x="10" y="24.3" width="1" height="1.6" fill="#222222" opacity="0.47"/><rect x="12" y="24.3" width="1" height="1.6" fill="#2a2aff" opacity="0.64"/><rect x="13" y="24.3" width="2" height="1.6" fill="#2a2aff" opacity="0.78"/><rect x="16" y="24.3" width="1" height="1.6" fill="#1f9a9a" opacity="0.78"/><rect x="17" y="24.3" width="2" height="1.6" fill="#1f9a9a" opacity="0.47"/><rect x="19" y="24.3" width="4" height="1.6" fill="#1f9a9a" opacity="0.78"/><rect x="23" y="24.3" width="2" height="1.6" fill="#1f9a9a" opacity="0.64"/><rect x="25" y="24.3" width="1" height="1.6" fill="#1f9a9a" opacity="0.47"/><rect x="26" y="24.3" width="1" height="1.6" fill="#1f9a9a" opacity="0.78"/><rect x="27" y="24.3" width="1" height="1.6" fill="#2a4cfb" opacity="0.47"/><rect x="28" y="24.3" width="1" height="1.6" fill="#b02a2a" opacity="0.30"/><rect x="29" y="24.3" width="1" height="1.6" fill="#b02a2a" opacity="0.64"/><rect x="30" y="24.3" width="1" height="1.6" fill="#b02a2a" opacity="0.30"/><rect x="31" y="24.3" width="2" height="1.6" fill="#b02a2a" opacity="0.47"/><rect x="33" y="24.3" width="1" height="1.6" fill="#b02a2a" opacity="0.64"/><rect x="34" y="24.3" width="1" height="1.6" fill="#b02a2a" opacity="0.30"/><rect x="35" y="24.3" width="1" height="1.6" fill="#b02a2a" opacity="0.64"/><rect x="36" y="24.3" width="2" height="1.6" fill="#b02a2a" opacity="0.47"/><rect x="38" y="24.3" width="1" height="1.6" fill="#b02a2a" opacity="0.30"/><rect x="39" y="24.3" width="5" height="1.6" fill="#b02a2a" opacity="0.64"/><rect x="44" y="24.3" width="2" height="1.6" fill="#b02a2a" opacity="0.47"/><rect x="46" y="24.3" width="2" height="1.6" fill="#b02a2a" opacity="0.78"/><rect x="48" y="24.3" width="1" height="1.6" fill="#b02a2a" opacity="0.47"/><rect x="49" y="24.3" width="2" height="1.6" fill="#b02a2a" opacity="0.78"/><rect x="51" y="24.3" width="1" height="1.6" fill="#b02a2a" opacity="0.30"/><rect x="52" y="24.3" width="1" height="1.6" fill="#b02a2a" opacity="0.47"/><rect x="53" y="24.3" width="1" height="1.6" fill="#b02a2a" opacity="0.78"/><rect x="54" y="24.3" width="1" height="1.6" fill="#b02a2a" opacity="0.64"/><rect x="55" y="24.3" width="1" height="1.6" fill="#b02a2a" opacity="0.78"/><rect x="56" y="24.3" width="1" height="1.6" fill="#b02a2a" opacity="0.47"/><rect x="57" y="24.3" width="1" height="1.6" fill="#b02a2a" opacity="0.64"/><rect x="58" y="24.3" width="1" height="1.6" fill="#b02a2a" opacity="0.78"/><rect x="59" y="24.3" width="2" height="1.6" fill="#b02a2a" opacity="0.47"/><rect x="61" y="24.3" width="2" height="1.6" fill="#b02a2a" opacity="0.64"/><rect x="63" y="24.3" width="1" height="1.6" fill="#b02a2a" opacity="0.30"/><rect x="64" y="24.3" width="1" height="1.6" fill="#2a4cfb" opacity="0.47"/><rect x="65" y="24.3" width="1" height="1.6" fill="#222222" opacity="0.30"/><rect x="0" y="26.3" width="1" height="1.6" fill="#222222" opacity="0.78"/><rect x="1" y="26.3" width="1" height="1.6" fill="#222222" opacity="0.47"/><rect x="2" y="26.3" width="1" height="1.6" fill="#222222" opacity="0.78"/><rect x="3" y="26.3" width="2" height="1.6" fill="#222222" opacity="0.47"/><rect x="5" y="26.3" width="1" height="1.6" fill="#222222" opacity="0.30"/><rect x="6" y="26.3" width="1" height="1.6" fill="#222222" opacity="0.78"/><rect x="7" y="26.3" width="1" height="1.6" fill="#222222" opacity="0.64"/><rect x="8" y="26.3" width="1" height="1.6" fill="#222222" opacity="0.78"/><rect x="9" y="26.3" width="1" height="1.6" fill="#222222" opacity="0.47"/><rect x="10" y="26.3" width="1" height="1.6" fill="#222222" opacity="0.64"/><rect x="11" y="26.3" width="1" height="1.6" fill="#2a4cfb" opacity="0.47"/><rect x="12" y="26.3" width="1" height="1.6" fill="#2a4cfb" opacity="0.47"/><rect x="13" y="26.3" width="1" height="1.6" fill="#222222" opacity="0.30"/><rect x="0" y="30.3" width="1" height="1.6" fill="#2a2aff" opacity="0.64"/><rect x="1" y="30.3" width="1" height="1.6" fill="#2a2aff" opacity="0.78"/><rect x="2" y="30.3" width="1" height="1.6" fill="#2a2aff" opacity="0.47"/><rect x="4" y="30.3" width="2" height="1.6" fill="#222222" opacity="0.64"/><rect x="6" y="30.3" width="1" height="1.6" fill="#222222" opacity="0.78"/><rect x="7" y="30.3" width="1" height="1.6" fill="#222222" opacity="0.47"/><rect x="8" y="30.3" width="1" height="1.6" fill="#222222" opacity="0.64"/><rect x="9" y="30.3" width="1" height="1.6" fill="#222222" opacity="0.78"/><rect x="10" y="30.3" width="2" height="1.6" fill="#222222" opacity="0.47"/><rect x="12" y="30.3" width="3" height="1.6" fill="#222222" opacity="0.64"/><rect x="15" y="30.3" width="1" height="1.6" fill="#222222" opacity="0.47"/><rect x="16" y="30.3" width="1" height="1.6" fill="#222222" opacity="0.78"/><rect x="17" y="30.3" width="2" height="1.6" fill="#222222" opacity="0.64"/><rect x="19" y="30.3" width="1" height="1.6" fill="#222222" opacity="0.78"/><rect x="20" y="30.3" width="2" height="1.6" fill="#222222" opacity="0.64"/><rect x="23" y="30.3" width="1" height="1.6" fill="#222222" opacity="0.47"/><rect x="25" y="30.3" width="1" height="1.6" fill="#2a4cfb" opacity="0.47"/><rect x="26" y="30.3" width="1" height="1.6" fill="#2a4cfb" opacity="0.47"/><rect x="27" y="30.3" width="1" height="1.6" fill="#222222" opacity="0.30"/><rect x="0" y="32.3" width="1" height="1.6" fill="#2a2aff" opacity="0.78"/><rect x="1" y="32.3" width="1" height="1.6" fill="#2a2aff" opacity="0.64"/><rect x="2" y="32.3" width="2" height="1.6" fill="#2a2aff" opacity="0.47"/><rect x="4" y="32.3" width="1" height="1.6" fill="#2a2aff" opacity="0.78"/><rect x="6" y="32.3" width="1" height="1.6" fill="#2a4cfb" opacity="0.47"/><rect x="7" y="32.3" width="1" height="1.6" fill="#222222" opacity="0.78"/><rect x="8" y="32.3" width="1" height="1.6" fill="#222222" opacity="0.47"/><rect x="9" y="32.3" width="1" height="1.6" fill="#222222" opacity="0.78"/><rect x="10" y="32.3" width="2" height="1.6" fill="#222222" opacity="0.47"/><rect x="12" y="32.3" width="1" height="1.6" fill="#222222" opacity="0.30"/><rect x="13" y="32.3" width="1" height="1.6" fill="#222222" opacity="0.64"/><rect x="14" y="32.3" width="1" height="1.6" fill="#222222" opacity="0.78"/><rect x="15" y="32.3" width="1" height="1.6" fill="#222222" opacity="0.64"/><rect x="16" y="32.3" width="1" height="1.6" fill="#222222" opacity="0.47"/><rect x="17" y="32.3" width="1" height="1.6" fill="#3f9f3f" opacity="0.47"/><rect x="18" y="32.3" width="1" height="1.6" fill="#3f9f3f" opacity="0.47"/><rect x="19" y="32.3" width="1" height="1.6" fill="#2a4cfb" opacity="0.47"/><rect x="21" y="32.3" width="1" height="1.6" fill="#2a4cfb" opacity="0.47"/><rect x="4" y="34.3" width="1" height="1.6" fill="#2a2aff" opacity="0.64"/><rect x="5" y="34.3" width="1" height="1.6" fill="#2a2aff" opacity="0.78"/><rect x="6" y="34.3" width="1" height="1.6" fill="#2a2aff" opacity="0.47"/><rect x="8" y="34.3" width="3" height="1.6" fill="#222222" opacity="0.78"/><rect x="12" y="34.3" width="1" height="1.6" fill="#222222" opacity="0.47"/><rect x="14" y="34.3" width="1" height="1.6" fill="#222222" opacity="0.78"/><rect x="15" y="34.3" width="1" height="1.6" fill="#222222" opacity="0.47"/><rect x="16" y="34.3" width="1" height="1.6" fill="#222222" opacity="0.78"/><rect x="17" y="34.3" width="2" height="1.6" fill="#222222" opacity="0.47"/><rect x="19" y="34.3" width="1" height="1.6" fill="#222222" opacity="0.30"/><rect x="20" y="34.3" width="2" height="1.6" fill="#222222" opacity="0.78"/><rect x="22" y="34.3" width="1" height="1.6" fill="#222222" opacity="0.47"/><rect x="23" y="34.3" width="2" height="1.6" fill="#222222" opacity="0.78"/><rect x="25" y="34.3" width="1" height="1.6" fill="#222222" opacity="0.47"/><rect x="26" y="34.3" width="1" height="1.6" fill="#222222" opacity="0.64"/><rect x="27" y="34.3" width="1" height="1.6" fill="#222222" opacity="0.78"/><rect x="28" y="34.3" width="1" height="1.6" fill="#3f9f3f" opacity="0.47"/><rect x="29" y="34.3" width="1" height="1.6" fill="#b02a2a" opacity="0.30"/><rect x="30" y="34.3" width="1" height="1.6" fill="#b02a2a" opacity="0.64"/><rect x="31" y="34.3" width="1" height="1.6" fill="#b02a2a" opacity="0.30"/><rect x="32" y="34.3" width="3" height="1.6" fill="#b02a2a" opacity="0.78"/><rect x="35" y="34.3" width="1" height="1.6" fill="#b02a2a" opacity="0.47"/><rect x="36" y="34.3" width="2" height="1.6" fill="#b02a2a" opacity="0.64"/><rect x="38" y="34.3" width="2" height="1.6" fill="#b02a2a" opacity="0.78"/><rect x="40" y="34.3" width="1" height="1.6" fill="#b02a2a" opacity="0.30"/><rect x="41" y="34.3" width="1" height="1.6" fill="#3f9f3f" opacity="0.47"/><rect x="42" y="34.3" width="1" height="1.6" fill="#222222" opacity="0.30"/><rect x="4" y="36.3" width="2" height="1.6" fill="#1f9a1f" opacity="0.47"/><rect x="7" y="36.3" width="3" height="1.6" fill="#1f9a1f" opacity="0.78"/><rect x="11" y="36.3" width="2" height="1.6" fill="#1f9a1f" opacity="0.64"/><rect x="13" y="36.3" width="1" height="1.6" fill="#1f9a1f" opacity="0.47"/><rect x="14" y="36.3" width="1" height="1.6" fill="#1f9a1f" opacity="0.64"/><rect x="16" y="36.3" width="2" height="1.6" fill="#1f9a1f" opacity="0.47"/><rect x="19" y="36.3" width="1" height="1.6" fill="#1f9a1f" opacity="0.47"/><rect x="20" y="36.3" width="1" height="1.6" fill="#1f9a1f" opacity="0.64"/><rect x="21" y="36.3" width="1" height="1.6" fill="#1f9a1f" opacity="0.78"/><rect x="23" y="36.3" width="2" height="1.6" fill="#1f9a1f" opacity="0.64"/><rect x="25" y="36.3" width="1" height="1.6" fill="#1f9a1f" opacity="0.78"/><rect x="26" y="36.3" width="1" height="1.6" fill="#1f9a1f" opacity="0.47"/><rect x="28" y="36.3" width="1" height="1.6" fill="#1f9a1f" opacity="0.78"/><rect x="29" y="36.3" width="1" height="1.6" fill="#1f9a1f" opacity="0.64"/><rect x="30" y="36.3" width="1" height="1.6" fill="#1f9a1f" opacity="0.78"/><rect x="31" y="36.3" width="1" height="1.6" fill="#1f9a1f" opacity="0.64"/><rect x="33" y="36.3" width="2" height="1.6" fill="#1f9a1f" opacity="0.78"/><rect x="35" y="36.3" width="1" height="1.6" fill="#1f9a1f" opacity="0.64"/><rect x="37" y="36.3" width="1" height="1.6" fill="#1f9a1f" opacity="0.64"/><rect x="38" y="36.3" width="1" height="1.6" fill="#1f9a1f" opacity="0.78"/><rect x="39" y="36.3" width="1" height="1.6" fill="#1f9a1f" opacity="0.64"/><rect x="40" y="36.3" width="1" height="1.6" fill="#1f9a1f" opacity="0.78"/><rect x="42" y="36.3" width="1" height="1.6" fill="#1f9a1f" opacity="0.78"/><rect x="43" y="36.3" width="2" height="1.6" fill="#1f9a1f" opacity="0.64"/><rect x="45" y="36.3" width="1" height="1.6" fill="#1f9a1f" opacity="0.78"/><rect x="46" y="36.3" width="2" height="1.6" fill="#1f9a1f" opacity="0.64"/><rect x="49" y="36.3" width="1" height="1.6" fill="#1f9a1f" opacity="0.47"/><rect x="50" y="36.3" width="2" height="1.6" fill="#1f9a1f" opacity="0.64"/><rect x="52" y="36.3" width="1" height="1.6" fill="#1f9a1f" opacity="0.47"/><rect x="53" y="36.3" width="1" height="1.6" fill="#1f9a1f" opacity="0.78"/><rect x="54" y="36.3" width="1" height="1.6" fill="#1f9a1f" opacity="0.64"/><rect x="55" y="36.3" width="1" height="1.6" fill="#1f9a1f" opacity="0.78"/><rect x="56" y="36.3" width="1" height="1.6" fill="#1f9a1f" opacity="0.47"/><rect x="4" y="38.3" width="2" height="1.6" fill="#2a2aff" opacity="0.47"/><rect x="7" y="38.3" width="1" height="1.6" fill="#3f9f3f" opacity="0.47"/><rect x="8" y="38.3" width="1" height="1.6" fill="#222222" opacity="0.47"/><rect x="9" y="38.3" width="2" height="1.6" fill="#222222" opacity="0.64"/><rect x="11" y="38.3" width="1" height="1.6" fill="#222222" opacity="0.78"/><rect x="12" y="38.3" width="1" height="1.6" fill="#222222" opacity="0.47"/><rect x="13" y="38.3" width="1" height="1.6" fill="#222222" opacity="0.64"/><rect x="14" y="38.3" width="1" height="1.6" fill="#222222" opacity="0.78"/><rect x="15" y="38.3" width="2" height="1.6" fill="#222222" opacity="0.47"/><rect x="17" y="38.3" width="1" height="1.6" fill="#222222" opacity="0.64"/><rect x="18" y="38.3" width="1" height="1.6" fill="#222222" opacity="0.78"/><rect x="19" y="38.3" width="2" height="1.6" fill="#222222" opacity="0.64"/><rect x="21" y="38.3" width="1" height="1.6" fill="#222222" opacity="0.78"/><rect x="22" y="38.3" width="2" height="1.6" fill="#222222" opacity="0.64"/><rect x="24" y="38.3" width="1" height="1.6" fill="#8a4a2a" opacity="0.47"/><rect x="25" y="38.3" width="3" height="1.6" fill="#222222" opacity="0.78"/><rect x="28" y="38.3" width="1" height="1.6" fill="#8a4a2a" opacity="0.47"/><rect x="29" y="38.3" width="1" height="1.6" fill="#3f9f3f" opacity="0.47"/><rect x="31" y="38.3" width="1" height="1.6" fill="#3f9f3f" opacity="0.47"/><rect x="8" y="40.3" width="2" height="1.6" fill="#222222" opacity="0.64"/><rect x="10" y="40.3" width="1" height="1.6" fill="#222222" opacity="0.78"/><rect x="11" y="40.3" width="1" height="1.6" fill="#222222" opacity="0.47"/><rect x="12" y="40.3" width="1" height="1.6" fill="#222222" opacity="0.64"/><rect x="13" y="40.3" width="1" height="1.6" fill="#222222" opacity="0.78"/><rect x="14" y="40.3" width="2" height="1.6" fill="#222222" opacity="0.47"/><rect x="16" y="40.3" width="3" height="1.6" fill="#222222" opacity="0.64"/><rect x="19" y="40.3" width="1" height="1.6" fill="#222222" opacity="0.47"/><rect x="20" y="40.3" width="1" height="1.6" fill="#222222" opacity="0.78"/><rect x="21" y="40.3" width="2" height="1.6" fill="#222222" opacity="0.64"/><rect x="23" y="40.3" width="1" height="1.6" fill="#222222" opacity="0.78"/><rect x="24" y="40.3" width="2" height="1.6" fill="#222222" opacity="0.64"/><rect x="26" y="40.3" width="1" height="1.6" fill="#8a4a2a" opacity="0.47"/><rect x="27" y="40.3" width="3" height="1.6" fill="#222222" opacity="0.78"/><rect x="30" y="40.3" width="1" height="1.6" fill="#8a4a2a" opacity="0.47"/><rect x="32" y="40.3" width="1" height="1.6" fill="#222222" opacity="0.47"/><rect x="34" y="40.3" width="2" height="1.6" fill="#2a2aff" opacity="0.47"/><rect x="36" y="40.3" width="1" height="1.6" fill="#2a2aff" opacity="0.64"/><rect x="37" y="40.3" width="1" height="1.6" fill="#2a2aff" opacity="0.78"/><rect x="38" y="40.3" width="1" height="1.6" fill="#222222" opacity="0.30"/><rect x="4" y="42.3" width="1" height="1.6" fill="#3f9f3f" opacity="0.47"/><rect x="0" y="44.3" width="1" height="1.6" fill="#2a4cfb" opacity="0.47"/><rect x="0" y="48.3" width="2" height="1.6" fill="#1f9a1f" opacity="0.47"/><rect x="3" y="48.3" width="2" height="1.6" fill="#1f9a1f" opacity="0.78"/><rect x="5" y="48.3" width="1" height="1.6" fill="#1f9a1f" opacity="0.47"/><rect x="7" y="48.3" width="1" height="1.6" fill="#1f9a1f" opacity="0.47"/><rect x="8" y="48.3" width="1" height="1.6" fill="#1f9a1f" opacity="0.64"/><rect x="9" y="48.3" width="1" height="1.6" fill="#1f9a1f" opacity="0.78"/><rect x="11" y="48.3" width="2" height="1.6" fill="#1f9a1f" opacity="0.47"/><rect x="13" y="48.3" width="1" height="1.6" fill="#1f9a1f" opacity="0.64"/><rect x="14" y="48.3" width="1" height="1.6" fill="#1f9a1f" opacity="0.47"/><rect x="16" y="48.3" width="1" height="1.6" fill="#1f9a1f" opacity="0.64"/><rect x="17" y="48.3" width="1" height="1.6" fill="#1f9a1f" opacity="0.47"/><rect x="19" y="48.3" width="2" height="1.6" fill="#1f9a1f" opacity="0.64"/><rect x="21" y="48.3" width="1" height="1.6" fill="#1f9a1f" opacity="0.78"/><rect x="22" y="48.3" width="1" height="1.6" fill="#1f9a1f" opacity="0.47"/><rect x="23" y="48.3" width="1" height="1.6" fill="#1f9a1f" opacity="0.64"/><rect x="25" y="48.3" width="1" height="1.6" fill="#1f9a1f" opacity="0.78"/><rect x="26" y="48.3" width="2" height="1.6" fill="#1f9a1f" opacity="0.47"/><rect x="28" y="48.3" width="3" height="1.6" fill="#1f9a1f" opacity="0.64"/><rect x="31" y="48.3" width="1" height="1.6" fill="#1f9a1f" opacity="0.47"/><rect x="33" y="48.3" width="1" height="1.6" fill="#1f9a1f" opacity="0.78"/><rect x="34" y="48.3" width="2" height="1.6" fill="#1f9a1f" opacity="0.64"/><rect x="36" y="48.3" width="1" height="1.6" fill="#1f9a1f" opacity="0.78"/><rect x="37" y="48.3" width="2" height="1.6" fill="#1f9a1f" opacity="0.64"/><rect x="0" y="50.3" width="1" height="1.6" fill="#2a2aff" opacity="0.64"/><rect x="1" y="50.3" width="1" height="1.6" fill="#2a2aff" opacity="0.78"/><rect x="2" y="50.3" width="1" height="1.6" fill="#2a2aff" opacity="0.47"/><rect x="4" y="50.3" width="1" height="1.6" fill="#222222" opacity="0.47"/><rect x="5" y="50.3" width="1" height="1.6" fill="#222222" opacity="0.78"/><rect x="6" y="50.3" width="2" height="1.6" fill="#222222" opacity="0.64"/><rect x="8" y="50.3" width="2" height="1.6" fill="#222222" opacity="0.47"/><rect x="11" y="50.3" width="1" height="1.6" fill="#222222" opacity="0.47"/><rect x="13" y="50.3" width="2" height="1.6" fill="#3a8ea8" opacity="0.78"/><rect x="15" y="50.3" width="1" height="1.6" fill="#3a8ea8" opacity="0.47"/><rect x="16" y="50.3" width="1" height="1.6" fill="#3a8ea8" opacity="0.78"/><rect x="17" y="50.3" width="1" height="1.6" fill="#3a8ea8" opacity="0.64"/><rect x="18" y="50.3" width="1" height="1.6" fill="#3a8ea8" opacity="0.47"/><rect x="19" y="50.3" width="1" height="1.6" fill="#222222" opacity="0.30"/><rect x="20" y="50.3" width="1" height="1.6" fill="#222222" opacity="0.64"/><rect x="21" y="50.3" width="1" height="1.6" fill="#222222" opacity="0.78"/><rect x="22" y="50.3" width="2" height="1.6" fill="#222222" opacity="0.64"/><rect x="24" y="50.3" width="1" height="1.6" fill="#2a4cfb" opacity="0.47"/><rect x="25" y="50.3" width="2" height="1.6" fill="#222222" opacity="0.64"/><rect x="27" y="50.3" width="1" height="1.6" fill="#222222" opacity="0.78"/><rect x="28" y="50.3" width="1" height="1.6" fill="#222222" opacity="0.47"/><rect x="29" y="50.3" width="1" height="1.6" fill="#222222" opacity="0.64"/><rect x="30" y="50.3" width="1" height="1.6" fill="#222222" opacity="0.78"/><rect x="31" y="50.3" width="2" height="1.6" fill="#222222" opacity="0.47"/><rect x="33" y="50.3" width="3" height="1.6" fill="#222222" opacity="0.64"/><rect x="36" y="50.3" width="1" height="1.6" fill="#222222" opacity="0.47"/><rect x="37" y="50.3" width="1" height="1.6" fill="#222222" opacity="0.78"/><rect x="38" y="50.3" width="2" height="1.6" fill="#222222" opacity="0.64"/><rect x="40" y="50.3" width="1" height="1.6" fill="#222222" opacity="0.78"/><rect x="41" y="50.3" width="2" height="1.6" fill="#222222" opacity="0.64"/><rect x="43" y="50.3" width="1" height="1.6" fill="#2a4cfb" opacity="0.47"/><rect x="44" y="50.3" width="1" height="1.6" fill="#222222" opacity="0.30"/><rect x="0" y="52.3" width="1" height="1.6" fill="#2a2aff" opacity="0.47"/><rect x="1" y="52.3" width="1" height="1.6" fill="#2a2aff" opacity="0.78"/><rect x="2" y="52.3" width="1" height="1.6" fill="#2a2aff" opacity="0.47"/><rect x="3" y="52.3" width="1" height="1.6" fill="#2a2aff" opacity="0.64"/><rect x="4" y="52.3" width="1" height="1.6" fill="#2a2aff" opacity="0.47"/><rect x="5" y="52.3" width="1" height="1.6" fill="#2a2aff" opacity="0.64"/><rect x="7" y="52.3" width="1" height="1.6" fill="#222222" opacity="0.47"/><rect x="8" y="52.3" width="1" height="1.6" fill="#222222" opacity="0.78"/><rect x="9" y="52.3" width="2" height="1.6" fill="#222222" opacity="0.64"/><rect x="11" y="52.3" width="2" height="1.6" fill="#222222" opacity="0.47"/><rect x="13" y="52.3" width="1" height="1.6" fill="#222222" opacity="0.30"/></svg>
  <div class="abs" style="left:1186px;top:52.3px;width:2px;height:1.8px;background:#ff1a1a"></div>
  <!-- overview ruler -->
  <div class="abs" style="left:1298px;top:0;width:1px;height:406px;background:#dedede"></div>
  <div class="abs" style="left:1299px;top:198px;width:12px;height:2px;background:#a0a0a0"></div>
  <div class="abs" style="left:1305px;top:199px;width:6px;height:7.5px;background:#ff5a5a"></div>
  <div class="abs" style="left:1305px;top:198.5px;width:6px;height:1.5px;background:#b23a3a"></div>
  <div id="status">
    <div class="abs" style="left:1168px;top:4px;width:1px;height:15px;background:#d4d4d4"></div>
    <svg class="abs" style="left:1172px;top:6px" width="13" height="12" viewBox="0 0 13 12"><path d="M5.00 2.80 Q5.58 6.12 8.90 6.70 Q5.58 7.29 5.00 10.60 Q4.42 7.29 1.10 6.70 Q4.42 6.12 5.00 2.80 Z" fill="#1d1d1d"/><path d="M9.30 1.30 Q9.60 3.00 11.30 3.30 Q9.60 3.60 9.30 5.30 Q9.00 3.60 7.30 3.30 Q9.00 3.00 9.30 1.30 Z" fill="#1d1d1d"/></svg>
    <div class="t" id="st" style="left:1190px;top:3.6px;font-size:11.25px;color:#16202b;-webkit-text-stroke:0">Código con Now Assist</div>
  </div>
</div>
</body>
</html>
